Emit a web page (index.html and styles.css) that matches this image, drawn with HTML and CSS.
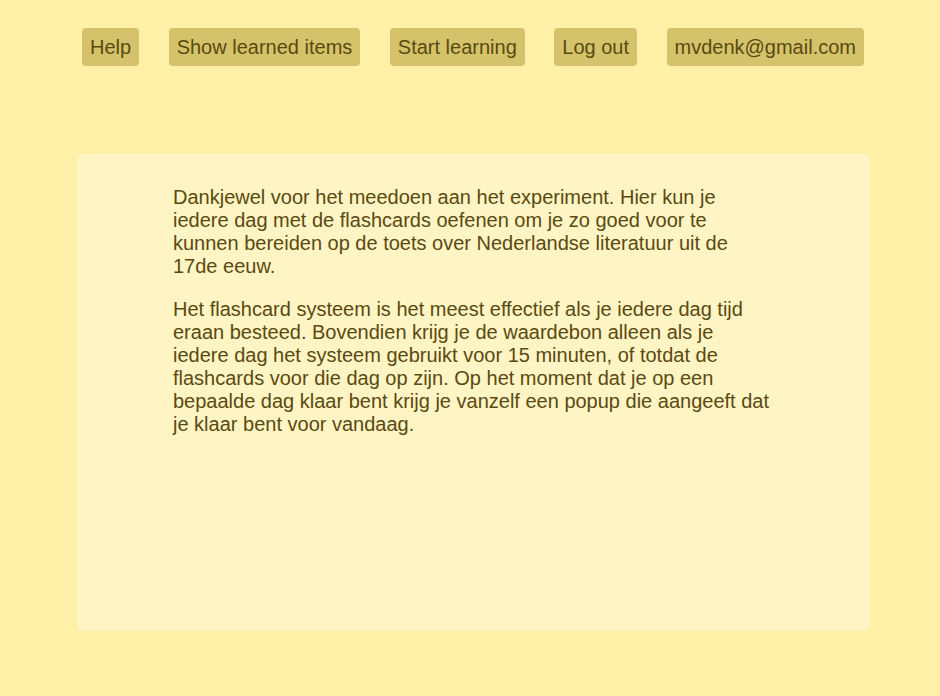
FILE: index.html
```html
<!DOCTYPE html>
<html lang="nl">
<head>
<meta charset="utf-8">
<title>Flashcards</title>
<link rel="stylesheet" href="styles.css">
</head>
<body>
<nav class="nav">
  <a class="btn" href="#">Help</a>
  <a class="btn" href="#">Show learned items</a>
  <a class="btn" href="#">Start learning</a>
  <a class="btn" href="#">Log out</a>
  <a class="btn" href="#">mvdenk@gmail.com</a>
</nav>
<main class="card">
  <div class="content">
    <p>Dankjewel voor het meedoen aan het experiment. Hier kun je iedere dag met de flashcards oefenen om je zo goed voor te kunnen bereiden op de toets over Nederlandse literatuur uit de 17de eeuw.</p>
    <p>Het flashcard systeem is het meest effectief als je iedere dag tijd eraan besteed. Bovendien krijg je de waardebon alleen als je iedere dag het systeem gebruikt voor 15 minuten, of totdat de flashcards voor die dag op zijn. Op het moment dat je op een bepaalde dag klaar bent krijg je vanzelf een popup die aangeeft dat je klaar bent voor vandaag.</p>
  </div>
</main>
</body>
</html>
```
FILE: styles.css
```css
html, body {
  margin: 0;
  padding: 0;
}
body {
  background: #fff0a8;
  font-family: "Liberation Sans", Arial, sans-serif;
  color: #5a4a10;
  height: 696px;
}
.nav {
  display: flex;
  gap: 29.5px;
  padding: 28px 0 0 82px;
}
.btn {
  display: block;
  background: #d4c36a;
  color: #5a4a10;
  text-decoration: none;
  font-size: 20px;
  line-height: 22px;
  padding: 8px;
  border-radius: 4px;
}
.card {
  margin: 88px 0 0 77px;
  width: 793px;
  height: 477px;
  box-sizing: border-box;
  background: #fff4c4;
  border-radius: 6px;
  padding: 32px 96px;
}
.content {
  width: 600px;
}
.content p {
  margin: 0 0 20px;
  font-size: 20px;
  line-height: 23px;
}
```
